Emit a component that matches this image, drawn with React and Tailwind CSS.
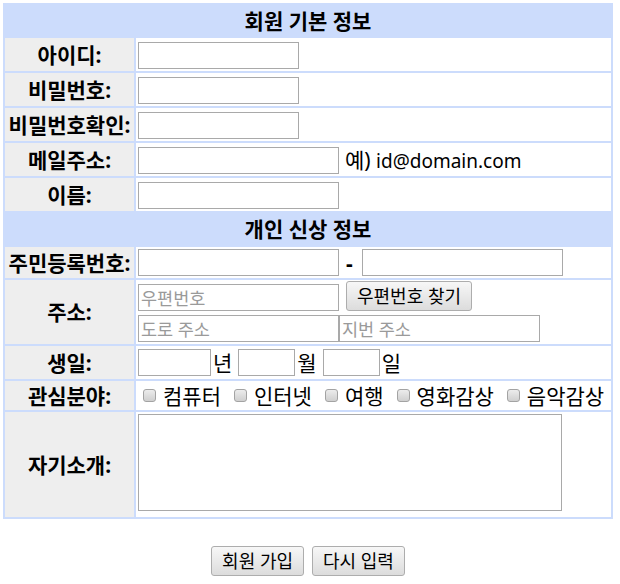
import React from 'react';

const inputCls =
  "h-[27px] border border-[#a9a9a9] bg-white px-[2px] text-[17.5px] text-black outline-none placeholder:text-[#9a9a9a]";
const labelCls = "bg-[#eeeeee] p-0 text-center align-middle font-bold text-[21px] leading-[24px] text-black";
const fieldCls = "bg-white p-0 pl-[2px] align-middle";

const Button = ({ children, className = "" }) => (
  <button
    type="button"
    className={`h-[30px] rounded-[3px] border border-[#adadad] bg-linear-to-b from-[#f7f7f7] to-[#dcdcdc] px-[10px] text-[18px] leading-none text-black ${className}`}
  >
    {children}
  </button>
);

const Check = ({ label }) => (
  <label className="flex items-center">
    <input
      type="checkbox"
      className="m-0 h-[13px] w-[13px] appearance-none rounded-[3px] border border-[#a3a3a3] bg-linear-to-b from-[#ececec] to-[#cfcfcf]"
    />
    <span className="ml-[7px]">{label}</span>
  </label>
);

const Row = ({ label, height = "h-[33px]", children, fieldClass = "" }) => (
  <tr>
    <td className={`${labelCls} ${height}`}>{label}</td>
    <td className={`${fieldCls} ${fieldClass}`}>{children}</td>
  </tr>
);

export default function App() {
  const interests = ["컴퓨터", "인터넷", "여행", "영화감상", "음악감상"];

  return (
    <div className="min-h-[584px] w-[620px] bg-white pt-[3px] pl-[3px] font-['Noto_Sans','Noto_Sans_CJK_KR',sans-serif] text-[21px] text-black">
      <table className="w-[610px] table-fixed border-separate border-spacing-[2px] bg-[#ccdcfc]">
        <colgroup>
          <col className="w-[129px]" />
          <col />
        </colgroup>
        <tbody>
          <tr>
            <td colSpan={2} className="h-[31px] p-0 text-center align-middle font-bold text-[21px] leading-[24px]">
              회원 기본 정보
            </td>
          </tr>
          <Row label="아이디:">
            <div className="flex items-center pt-[2px]">
              <input className={`${inputCls} w-[161px]`} />
            </div>
          </Row>
          <Row label="비밀번호:">
            <div className="flex items-center pt-[2px]">
              <input type="password" className={`${inputCls} w-[161px]`} />
            </div>
          </Row>
          <Row label="비밀번호확인:">
            <div className="flex items-center pt-[2px]">
              <input type="password" className={`${inputCls} w-[161px]`} />
            </div>
          </Row>
          <Row label="메일주소:">
            <div className="flex items-center pt-[2px] leading-[24px]">
              <input className={`${inputCls} w-[201px]`} />
              <span className="ml-[6px]">
                예) <span className="text-[19px]">id@domain.com</span>
              </span>
            </div>
          </Row>
          <Row label="이름:">
            <div className="flex items-center pt-[2px]">
              <input className={`${inputCls} w-[201px]`} />
            </div>
          </Row>
          <tr>
            <td colSpan={2} className="h-[32px] p-0 text-center align-middle font-bold text-[21px] leading-[24px]">
              개인 신상 정보
            </td>
          </tr>
          <Row label="주민등록번호:" height="h-[31px]">
            <div className="flex items-center leading-[24px]">
              <input className={`${inputCls} w-[201px]`} />
              <span className="ml-[7px] font-bold">-</span>
              <input className={`${inputCls} ml-[9px] w-[201px]`} />
            </div>
          </Row>
          <Row label="주소:" height="h-[64px]" fieldClass="align-top">
            <div className="flex h-[32px] items-end pb-[1px]">
              <input placeholder="우편번호" className={`${inputCls} w-[201px]`} />
              <Button className="ml-[7px]">우편번호 찾기</Button>
            </div>
            <div className="mt-[3px] flex">
              <input placeholder="도로 주소" className={`${inputCls} w-[201px]`} />
              <input placeholder="지번 주소" className={`${inputCls} w-[201px]`} />
            </div>
          </Row>
          <Row label="생일:">
            <div className="flex items-center leading-[24px]">
              <input className={`${inputCls} w-[73px]`} />
              <span className="ml-[2px]">년</span>
              <input className={`${inputCls} ml-[6px] w-[57px]`} />
              <span className="ml-[2px]">월</span>
              <input className={`${inputCls} ml-[6px] w-[57px]`} />
              <span className="ml-[2px]">일</span>
            </div>
          </Row>
          <Row label="관심분야:" height="h-[29px]">
            <div className="flex items-center gap-[13px] pl-[5px] leading-[24px]">
              {interests.map((item) => (
                <Check key={item} label={item} />
              ))}
            </div>
          </Row>
          <Row label="자기소개:" height="h-[105px]" fieldClass="align-top">
            <div className="pt-[2px]">
              <textarea className="block h-[97px] w-[424px] resize-none border border-[#a9a9a9] bg-white p-[2px] text-[16px] outline-none" />
            </div>
          </Row>
        </tbody>
      </table>

      <div className="mt-[27px] flex w-[610px] justify-center gap-[8px]">
        <Button>회원 가입</Button>
        <Button>다시 입력</Button>
      </div>
    </div>
  );
}
